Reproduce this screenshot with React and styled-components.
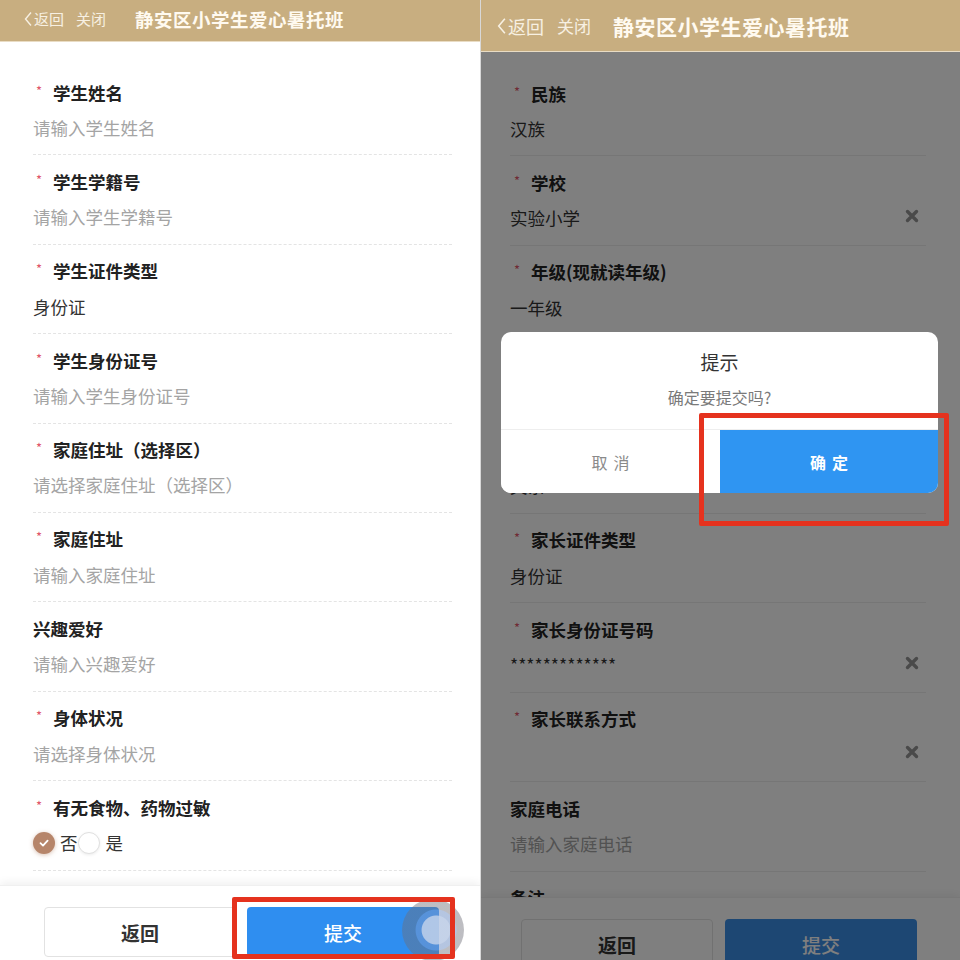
import React from "react";
import styled, { createGlobalStyle } from "styled-components";

const Global = createGlobalStyle`
  html, body { margin: 0; padding: 0; background: #fff; }
  body { font-family: "Noto Sans CJK SC", "Noto Sans", sans-serif; }
  * { box-sizing: border-box; }
`;

const Stage = styled.div`
  position: relative;
  display: grid;
  grid-template-columns: 480px 480px;
  width: 960px;
  height: 960px;
  overflow: hidden;
  background: #fff;
`;

const Phone = styled.div`
  position: relative;
  display: flex;
  flex-direction: column;
  height: 960px;
  overflow: hidden;
  background: #fff;
  border-left: ${(p) => (p.$divider ? "1px solid #d8d8d8" : "none")};
`;

const Header = styled.header`
  flex-shrink: 0;
  height: ${(p) => p.$h}px;
  display: flex;
  align-items: center;
  padding: 0 0 ${(p) => p.$pb}px ${(p) => p.$pl}px;
  background: #c8ae80;
  border-bottom: 1px solid #e9dcc4;
  color: #fbf6ec;
`;

const NavLink = styled.span`
  display: flex;
  align-items: center;
  font-size: ${(p) => p.$fs}px;
  color: #f7f0e2;
  margin-right: ${(p) => p.$mr}px;
  white-space: nowrap;
`;

const Chevron = styled.svg`
  width: ${(p) => p.$w}px;
  height: ${(p) => p.$w * 2}px;
  margin-right: 2px;
`;

const Title = styled.span`
  font-size: ${(p) => p.$fs}px;
  font-weight: 700;
  color: #fffaf0;
  letter-spacing: 0.5px;
  white-space: nowrap;
`;

const Form = styled.div`
  flex: 1;
  overflow: hidden;
  padding-top: ${(p) => p.$pt}px;
`;

const FieldRow = styled.div`
  position: relative;
  margin: 0 ${(p) => p.$mr}px 0 ${(p) => p.$ml}px;
  padding: 14px 0 15px;
  border-bottom: 1px ${(p) => (p.$solid ? "solid #ececec" : "dashed #e4e4e4")};
`;

const LabelLine = styled.div`
  display: flex;
  align-items: center;
  height: 24px;
  margin-bottom: 11.4px;
  padding-left: ${(p) => p.$indent}px;
`;

const Star = styled.span`
  width: 20px;
  margin-left: -20px;
  padding-left: 3px;
  color: #e0566a;
  font-size: 13px;
  line-height: 1;
  align-self: center;
  margin-top: -4px;
`;

const Label = styled.span`
  font-size: 17.5px;
  font-weight: 700;
  color: #222;
  white-space: nowrap;
`;

const ValueLine = styled.div`
  display: flex;
  align-items: center;
  height: 24px;
  font-size: 17.5px;
  color: ${(p) => (p.$placeholder ? "#a4a4a4" : "#333")};
  white-space: nowrap;
`;

const ClearIcon = styled.svg`
  position: absolute;
  right: ${(p) => p.$right}px;
  bottom: 22px;
  width: 14px;
  height: 14px;
`;

const RadioGroup = styled.div`
  display: flex;
  align-items: center;
  height: 24px;
  font-size: 17.5px;
  color: #333;
`;

const RadioDot = styled.span`
  display: inline-flex;
  align-items: center;
  justify-content: center;
  width: 22px;
  height: 22px;
  border-radius: 50%;
  margin: 0 ${(p) => p.$mr}px 0 0;
  background: ${(p) => (p.$on ? "#b6856a" : "#fff")};
  border: ${(p) => (p.$on ? "none" : "1px solid #e0e0e0")};
  box-shadow: ${(p) => (p.$on ? "0 1px 4px rgba(182,133,106,0.5)" : "0 1px 3px rgba(0,0,0,0.08)")};
`;

const BottomBar = styled.div`
  flex-shrink: 0;
  height: ${(p) => p.$h}px;
  display: flex;
  gap: ${(p) => p.$gap}px;
  padding: 21px 0 0 ${(p) => p.$pl}px;
  background: #fff;
  box-shadow: 0 -3px 8px rgba(0, 0, 0, 0.06);
  border-top: 1px solid #f0f0f0;
`;

const BarButton = styled.div`
  width: 192px;
  height: 50px;
  flex-shrink: 0;
  display: flex;
  align-items: center;
  justify-content: center;
  border-radius: 4px;
  font-size: 19px;
  font-weight: ${(p) => (p.$primary ? 500 : 700)};
  color: ${(p) => (p.$primary ? "#fff" : "#333")};
  background: ${(p) => (p.$primary ? p.$blue || "#2f8ef0" : "#fff")};
  border: 1px solid ${(p) => (p.$primary ? "transparent" : "#e2e2e2")};
`;

const Overlay = styled.div`
  position: absolute;
  left: 0;
  right: 0;
  top: ${(p) => p.$top}px;
  bottom: 0;
  background: rgba(0, 0, 0, 0.5);
`;

const Dialog = styled.div`
  position: absolute;
  left: 20px;
  top: 332px;
  width: 437px;
  height: 161px;
  border-radius: 10px;
  background: #fff;
  overflow: hidden;
  display: flex;
  flex-direction: column;
`;

const DialogBody = styled.div`
  height: 98px;
  display: flex;
  flex-direction: column;
  align-items: center;
  padding-top: 18px;
  gap: 11px;
  border-bottom: 1px solid #eeeeee;
`;

const DialogTitle = styled.div`
  font-size: 19px;
  line-height: 24px;
  color: #333;
`;

const DialogMsg = styled.div`
  font-size: 16px;
  line-height: 24px;
  color: #7a7a7a;
`;

const DialogActions = styled.div`
  flex: 1;
  display: grid;
  grid-template-columns: 219px 1fr;
`;

const DialogBtn = styled.div`
  display: flex;
  align-items: center;
  justify-content: center;
  font-size: 16px;
  letter-spacing: 6px;
  padding-left: 6px;
  color: ${(p) => (p.$primary ? "#fff" : "#8a8a8a")};
  font-weight: ${(p) => (p.$primary ? 700 : 400)};
  background: ${(p) => (p.$primary ? "#2f95f2" : "#fff")};
`;

const Annotation = styled.div`
  position: absolute;
  left: ${(p) => p.$x}px;
  top: ${(p) => p.$y}px;
  width: ${(p) => p.$w}px;
  height: ${(p) => p.$h}px;
  border: 5px solid #e5321e;
  border-radius: 2px;
  pointer-events: none;
`;

const TouchRipple = styled.div`
  position: absolute;
  left: 402px;
  top: 899px;
  width: 62px;
  height: 62px;
  border-radius: 50%;
  background: radial-gradient(circle at 55% 50%, rgba(190, 205, 230, 0.9) 0 14px, rgba(120, 150, 200, 0.55) 15px 20px, rgba(110, 110, 120, 0.45) 21px 31px);
`;

const ChevronIcon = ({ w }) => (
  <Chevron $w={w} viewBox="0 0 8 16">
    <path d="M7 1.5 L1.5 8 L7 14.5" fill="none" stroke="#f7f0e2" strokeWidth="1.4" />
  </Chevron>
);

const XIcon = ({ right }) => (
  <ClearIcon $right={right} viewBox="0 0 14 14">
    <path d="M2.5 2.5 L11.5 11.5 M11.5 2.5 L2.5 11.5" stroke="#959595" strokeWidth="3.4" strokeLinecap="round" />
  </ClearIcon>
);

const CheckMark = () => (
  <svg width="12" height="12" viewBox="0 0 12 12">
    <path d="M2.5 6.2 L5 8.6 L9.6 3.6" fill="none" stroke="#fff" strokeWidth="1.8" strokeLinecap="round" strokeLinejoin="round" />
  </svg>
);

const Field = ({ f, geo }) => (
  <FieldRow $ml={geo.ml} $mr={geo.mr} $solid={geo.solid}>
    <LabelLine $indent={f.required ? geo.indent : 0}>
      {f.required && <Star>*</Star>}
      <Label>{f.label}</Label>
    </LabelLine>
    {f.radio ? (
      <RadioGroup>
        <RadioDot $on $mr={5}>
          <CheckMark />
        </RadioDot>
        否
        <RadioDot $mr={6}></RadioDot>
        是
      </RadioGroup>
    ) : (
      <ValueLine $placeholder={!!f.placeholder}>
        {f.placeholder || f.value || ""}
      </ValueLine>
    )}
    {f.clear && <XIcon right={geo.xRight} />}
  </FieldRow>
);

const leftFields = [
  { label: "学生姓名", required: true, placeholder: "请输入学生姓名" },
  { label: "学生学籍号", required: true, placeholder: "请输入学生学籍号" },
  { label: "学生证件类型", required: true, value: "身份证" },
  { label: "学生身份证号", required: true, placeholder: "请输入学生身份证号" },
  { label: "家庭住址（选择区）", required: true, placeholder: "请选择家庭住址（选择区）" },
  { label: "家庭住址", required: true, placeholder: "请输入家庭住址" },
  { label: "兴趣爱好", placeholder: "请输入兴趣爱好" },
  { label: "身体状况", required: true, placeholder: "请选择身体状况" },
  { label: "有无食物、药物过敏", required: true, radio: true },
];

const rightFields = [
  { label: "民族", required: true, value: "汉族" },
  { label: "学校", required: true, value: "实验小学", clear: true },
  { label: "年级(现就读年级)", required: true, value: "一年级" },
  { label: "性别", required: true, value: "男" },
  { label: "与学生关系", required: true, value: "父亲" },
  { label: "家长证件类型", required: true, value: "身份证" },
  { label: "家长身份证号码", required: true, value: "*************", clear: true },
  { label: "家长联系方式", required: true, value: "", clear: true },
  { label: "家庭电话", placeholder: "请输入家庭电话" },
  { label: "备注", placeholder: "请输入备注" },
];

const leftGeo = { ml: 33, mr: 28, indent: 20, solid: false, xRight: 0 };
const rightGeo = { ml: 29, mr: 34, indent: 21, solid: true, xRight: 7 };

export default function App() {
  return (
    <>
      <Global />
      <Stage>
        <Phone>
          <Header $h={42} $pl={24} $pb={4}>
            <NavLink $fs={15} $mr={12}>
              <ChevronIcon w={8} />
              返回
            </NavLink>
            <NavLink $fs={15} $mr={29}>关闭</NavLink>
            <Title $fs={18.5}>静安区小学生爱心暑托班</Title>
          </Header>
          <Form $pt={24}>
            {leftFields.map((f) => (
              <Field key={f.label} f={f} geo={leftGeo} />
            ))}
          </Form>
          <BottomBar $h={75} $pl={44} $gap={11}>
            <BarButton>返回</BarButton>
            <BarButton $primary>提交</BarButton>
          </BottomBar>
          <TouchRipple />
        </Phone>
        <Phone $divider>
          <Header $h={52} $pl={16} $pb={0}>
            <NavLink $fs={18} $mr={13}>
              <ChevronIcon w={9} />
              返回
            </NavLink>
            <NavLink $fs={17} $mr={22}>关闭</NavLink>
            <Title $fs={21}>静安区小学生爱心暑托班</Title>
          </Header>
          <Form $pt={15}>
            {rightFields.map((f) => (
              <Field key={f.label} f={f} geo={rightGeo} />
            ))}
          </Form>
          <BottomBar $h={63} $pl={40} $gap={12}>
            <BarButton>返回</BarButton>
            <BarButton $primary $blue="#3a8ee6">提交</BarButton>
          </BottomBar>
          <Overlay $top={52} />
          <Dialog>
            <DialogBody>
              <DialogTitle>提示</DialogTitle>
              <DialogMsg>确定要提交吗?</DialogMsg>
            </DialogBody>
            <DialogActions>
              <DialogBtn>取消</DialogBtn>
              <DialogBtn $primary>确定</DialogBtn>
            </DialogActions>
          </Dialog>
        </Phone>
        <Annotation $x={232} $y={897} $w={223} $h={62} />
        <Annotation $x={699} $y={413} $w={250} $h={113} />
      </Stage>
    </>
  );
}
